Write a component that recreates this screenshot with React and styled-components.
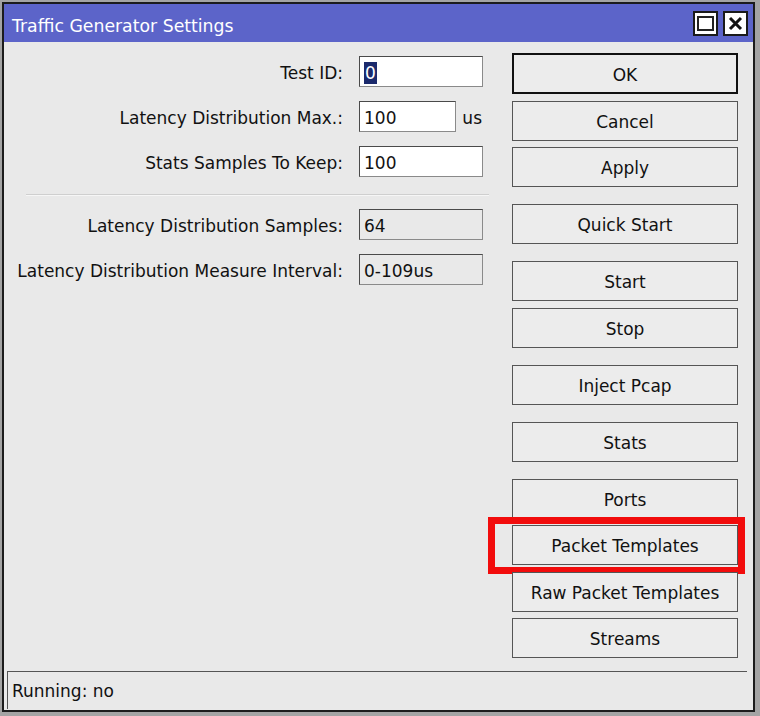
import React from 'react';
import styled, { createGlobalStyle } from 'styled-components';

const GlobalStyle = createGlobalStyle`
    html, body {
        margin: 0;
        padding: 0;
        background: #a4a4a4;
    }
    body {
        font-family: "DejaVu Sans", "Liberation Sans", sans-serif;
    }
`;

const Page = styled.div`
    width: 760px;
    height: 716px;
    padding: 2px;
    box-sizing: border-box;
`;

const Window = styled.div`
    width: 753px;
    height: 710px;
    box-sizing: border-box;
    border: 2px solid #1c1c1c;
    background: #e9e9e9;
    display: flex;
    flex-direction: column;
`;

const TitleBar = styled.div`
    height: 38px;
    flex: none;
    background: #5c64c9;
    display: flex;
    align-items: center;
    padding: 0 5px 0 8px;
    color: #ffffff;
    font-size: 17.3px;
`;

const TitleText = styled.span`
    flex: 1;
    padding-top: 5px;
`;

const TitleButton = styled.div`
    width: 25px;
    height: 25px;
    box-sizing: border-box;
    border: 2px solid #1a1a1a;
    background: #ffffff;
    margin-left: 5px;
    display: flex;
    align-items: center;
    justify-content: center;
`;

const Body = styled.div`
    flex: 1;
    display: flex;
    flex-direction: row;
`;

const Form = styled.div`
    width: 486px;
    padding: 14px 0 0 6px;
    box-sizing: border-box;
`;

const FieldGrid = styled.div`
    display: grid;
    grid-template-columns: 333px 124px;
    column-gap: 16px;
    row-gap: 14px;
    align-items: center;
`;

const Label = styled.div`
    text-align: right;
    font-size: 17px;
    color: #111;
    white-space: nowrap;
    padding-top: 2px;
`;

const FieldCell = styled.div`
    display: flex;
    align-items: center;
    justify-content: space-between;
`;

const Field = styled.div`
    width: ${p => p.$width || 124}px;
    height: 31px;
    box-sizing: border-box;
    border: 1px solid #4a4a4a;
    border-right-color: #8a8a8a;
    border-bottom-color: #8a8a8a;
    background: ${p => (p.$readOnly ? '#e9e9e9' : '#ffffff')};
    font-size: 17px;
    color: #111;
    padding: 2px 4px 0;
    display: flex;
    align-items: center;
`;

const Unit = styled.span`
    font-size: 17px;
    color: #111;
    padding: 2px 1px 0 0;
`;

const Selected = styled.span`
    background: #1b2a6c;
    color: #ffffff;
    padding: 0 1px;
    line-height: 22px;
`;

const Separator = styled.div`
    margin: 17px 0 13px 16px;
    width: 463px;
    border-top: 1px solid #cfcfcf;
    border-bottom: 1px solid #f6f6f6;
`;

const Buttons = styled.div`
    width: 226px;
    margin-left: 22px;
    padding-top: 11px;
    display: flex;
    flex-direction: column;
    gap: 17px;
`;

const ButtonGroup = styled.div`
    display: flex;
    flex-direction: column;
    gap: 6.5px;
`;

const Button = styled.div`
    position: relative;
    height: ${p => (p.$default ? 41 : 40)}px;
    box-sizing: border-box;
    border: ${p => (p.$default ? '2px solid #111' : '1px solid #555')};
    background: #ececec;
    display: flex;
    align-items: center;
    justify-content: center;
    padding-top: 2px;
    font-size: 17px;
    color: #111;
    white-space: nowrap;
`;

const Highlight = styled.div`
    position: absolute;
    top: -9px;
    left: -25px;
    right: -8px;
    bottom: -10px;
    border: 7px solid #f20c0c;
    pointer-events: none;
`;

const StatusBar = styled.div`
    height: 38px;
    flex: none;
    margin: 0 6px 1px 3px;
    box-sizing: border-box;
    border-top: 1px solid #555;
    border-left: 1px solid #555;
    display: flex;
    align-items: center;
    padding-left: 4px;
    font-size: 17px;
    color: #111;
`;

const MaximizeIcon = () => (
    <svg width="17" height="15" viewBox="0 0 17 15">
        <rect x="1" y="1" width="15" height="13" fill="none" stroke="#222" strokeWidth="2" />
    </svg>
);

const CloseIcon = () => (
    <svg width="15" height="15" viewBox="0 0 15 15">
        <path d="M2 2 L13 13 M13 2 L2 13" stroke="#111" strokeWidth="3" />
    </svg>
);

const topFields = [
    { label: 'Test ID:', value: <Selected>0</Selected> },
    { label: 'Latency Distribution Max.:', value: '100', unit: 'us' },
    { label: 'Stats Samples To Keep:', value: '100' },
];

const infoFields = [
    { label: 'Latency Distribution Samples:', value: '64' },
    { label: 'Latency Distribution Measure Interval:', value: '0-109us' },
];

const buttonGroups = [
    ['OK', 'Cancel', 'Apply'],
    ['Quick Start'],
    ['Start', 'Stop'],
    ['Inject Pcap'],
    ['Stats'],
    ['Ports', 'Packet Templates', 'Raw Packet Templates', 'Streams'],
];

export default function App() {
    return (
        <Page>
            <GlobalStyle />
            <Window>
                <TitleBar>
                    <TitleText>Traffic Generator Settings</TitleText>
                    <TitleButton><MaximizeIcon /></TitleButton>
                    <TitleButton><CloseIcon /></TitleButton>
                </TitleBar>
                <Body>
                    <Form>
                        <FieldGrid>
                            {topFields.map(f => (
                                <React.Fragment key={f.label}>
                                    <Label>{f.label}</Label>
                                    <FieldCell>
                                        <Field $width={f.unit ? 97 : 124}>{f.value}</Field>
                                        {f.unit && <Unit>{f.unit}</Unit>}
                                    </FieldCell>
                                </React.Fragment>
                            ))}
                        </FieldGrid>
                        <Separator />
                        <FieldGrid>
                            {infoFields.map(f => (
                                <React.Fragment key={f.label}>
                                    <Label>{f.label}</Label>
                                    <FieldCell>
                                        <Field $readOnly>{f.value}</Field>
                                    </FieldCell>
                                </React.Fragment>
                            ))}
                        </FieldGrid>
                    </Form>
                    <Buttons>
                        {buttonGroups.map((group, i) => (
                            <ButtonGroup key={i}>
                                {group.map(name => (
                                    <Button key={name} $default={name === 'OK'}>
                                        {name}
                                        {name === 'Packet Templates' && <Highlight />}
                                    </Button>
                                ))}
                            </ButtonGroup>
                        ))}
                    </Buttons>
                </Body>
                <StatusBar>Running: no</StatusBar>
            </Window>
        </Page>
    );
}
